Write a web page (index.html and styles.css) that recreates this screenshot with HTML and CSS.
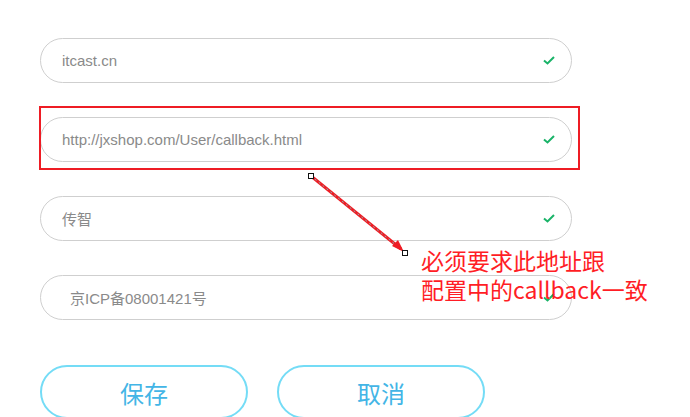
FILE: index.html
```html
<!DOCTYPE html>
<html lang="zh-CN">
<head>
<meta charset="utf-8">
<link rel="stylesheet" href="styles.css">
</head>
<body>
<div class="page">
  <form class="form">
    <div class="field"><span class="value">itcast.cn</span><svg class="check" viewBox="0 0 12 9" width="12" height="9"><path d="M1 4.5 L4.5 7.5 L11 1" fill="none" stroke="#19b368" stroke-width="2"/></svg></div>
    <div class="field"><span class="value">http://jxshop.com/User/callback.html</span><svg class="check" viewBox="0 0 12 9" width="12" height="9"><path d="M1 4.5 L4.5 7.5 L11 1" fill="none" stroke="#19b368" stroke-width="2"/></svg></div>
    <div class="field"><span class="value">传智</span><svg class="check" viewBox="0 0 12 9" width="12" height="9"><path d="M1 4.5 L4.5 7.5 L11 1" fill="none" stroke="#19b368" stroke-width="2"/></svg></div>
    <div class="field"><span class="value indent">京ICP备08001421号</span><svg class="check" viewBox="0 0 12 9" width="12" height="9"><path d="M1 4.5 L4.5 7.5 L11 1" fill="none" stroke="#19b368" stroke-width="2"/></svg></div>
    <div class="actions">
      <button type="button" class="btn">保存</button>
      <button type="button" class="btn">取消</button>
    </div>
  </form>

  <div class="highlight"></div>
  <svg class="arrow" width="690" height="417" viewBox="0 0 690 417">
    <line x1="311" y1="176" x2="401" y2="249" stroke="#ee1c24" stroke-width="3"/>
    <line x1="311" y1="176" x2="401" y2="249" stroke="#7fb8b8" stroke-width="1" stroke-dasharray="2 3"/>
    <path d="M404 252 L392 246 L398 240 Z" fill="#ee1c24"/>
    <rect x="308.5" y="173.5" width="5" height="5" fill="#fff" stroke="#111" stroke-width="1"/>
    <rect x="402.5" y="250.5" width="5" height="5" fill="#fff" stroke="#111" stroke-width="1"/>
  </svg>
  <div class="note">必须要求此地址跟<br>配置中的callback一致</div>
</div>
</body>
</html>
```

FILE: styles.css
```css
html, body {
  margin: 0;
  padding: 0;
  background: #fff;
}
body {
  width: 690px;
  height: 417px;
  overflow: hidden;
  font-family: "Liberation Sans", Arial, "Noto Sans CJK SC", sans-serif;
}
.page {
  position: relative;
  width: 690px;
  height: 417px;
}
.form {
  display: flex;
  flex-direction: column;
  gap: 34px;
  padding: 38px 0 0 40px;
  width: 532px;
  margin: 0;
}
.field {
  box-sizing: border-box;
  height: 45px;
  border: 1px solid #cfcfcf;
  border-radius: 23px;
  display: flex;
  align-items: center;
  justify-content: space-between;
  padding: 0 16px 0 21px;
}
.value {
  font-size: 15px;
  color: #8a8a8a;
}
.value.indent {
  padding-left: 8px;
}
.check {
  display: block;
}
.actions {
  display: flex;
  gap: 29px;
  margin-top: 11px;
}
.btn {
  box-sizing: border-box;
  width: 208px;
  height: 54px;
  border: 2px solid #74dcf6;
  border-radius: 27px;
  background: #fff;
  color: #43b5e6;
  font-family: "Noto Sans CJK SC", sans-serif;
  font-size: 24px;
  padding: 0;
}
.highlight {
  position: absolute;
  left: 39px;
  top: 106px;
  width: 537px;
  height: 60px;
  border: 2px solid #ee1c24;
}
.arrow {
  position: absolute;
  left: 0;
  top: 0;
}
.note {
  position: absolute;
  left: 421px;
  top: 246px;
  font-family: "Noto Sans CJK SC", sans-serif;
  font-size: 23px;
  line-height: 29px;
  color: #ff1d25;
}
```
